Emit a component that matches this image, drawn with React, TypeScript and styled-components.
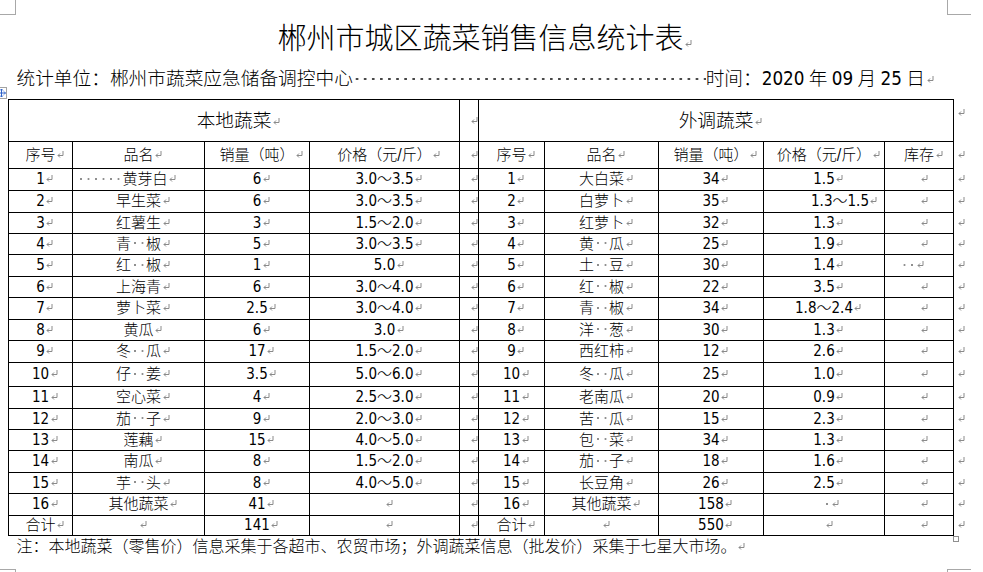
import React from "react";
import styled, { createGlobalStyle } from "styled-components";

const MIX = `"DejaVu Sans Condensed", "Noto Sans CJK SC", sans-serif`;

const GlobalStyle = createGlobalStyle`
  html, body { margin: 0; padding: 0; background: #fff; }
  body { font-family: ${MIX}; color: #000; font-weight: 300; }
`;

const Page = styled.div`
  position: relative;
  width: 983px;
  height: 572px;
  overflow: hidden;
  padding-left: 8px;
  box-sizing: border-box;
  background: #fff;
`;

const Title = styled.h1`
  margin: 16px 0 0;
  width: 945px;
  height: 40px;
  font: 300 29px/40px "Noto Sans CJK SC", sans-serif;
  text-align: center;
  white-space: nowrap;
`;

const InfoLine = styled.div`
  display: flex;
  align-items: center;
  margin: 10.5px 0 0 8.5px;
  width: 908.5px;
  height: 24px;
  font-size: 18.7px;
  line-height: 24px;
  white-space: nowrap;
`;

const Leader = styled.span`
  flex: 1;
  align-self: stretch;
  background-image: radial-gradient(circle, #444 1px, transparent 1.5px);
  background-size: 8.1px 100%;
  background-repeat: repeat-x;
  background-position: 0 55%;
`;

const TimeText = styled.span`
  word-spacing: -1px;
`;

const Sheet = styled.table`
  margin-top: 8.5px;
  border-collapse: collapse;
  table-layout: fixed;
  width: 965px;
  font-family: ${MIX};
  font-size: 15px;
`;

const Row = styled.tr<{ $h: number }>`
  height: ${(p) => p.$h}px;
`;

const Cell = styled.td<{ $shift?: number; $big?: boolean }>`
  border: 1px solid #000;
  padding: 0 ${(p) => (p.$shift && p.$shift < 0 ? -2 * p.$shift : 0)}px 0
    ${(p) => (p.$shift && p.$shift > 0 ? 2 * p.$shift : 0)}px;
  text-align: center;
  vertical-align: middle;
  white-space: nowrap;
  line-height: 18px;
  font-size: ${(p) => (p.$big ? 18.7 : 15)}px;
`;

const EndCell = styled.td<{ $top?: boolean }>`
  border: none;
  padding: ${(p) => (p.$top ? "4px" : "0")} 0 0 2px;
  vertical-align: ${(p) => (p.$top ? "top" : "middle")};
  text-align: left;
  line-height: 18px;
  white-space: nowrap;
`;

const MarkSvg = styled.svg`
  display: inline-block;
  width: 7px;
  height: 7px;
  margin-left: 1.5px;
  margin-right: -8.5px;
  vertical-align: 2px;
  overflow: visible;
`;

const SpaceDot = styled.span<{ $tone?: string }>`
  display: inline-block;
  width: 7.5px;
  height: 10px;
  vertical-align: 0.5px;
  background: radial-gradient(circle at 50% 50%, ${(p) => p.$tone || "#8f8f8f"} 0.8px, transparent 1.3px);
`;

const Note = styled.p`
  margin: 0 0 0 8.5px;
  font-size: 16px;
  line-height: 22px;
  white-space: nowrap;
`;

const MoveHandle = styled.div`
  position: absolute;
  left: -4px;
  top: 87px;
  width: 11px;
  height: 12px;
  box-sizing: border-box;
  border: 1px solid #a3a3a3;
  background: #fff;
  display: flex;
  align-items: center;
  justify-content: center;
`;

const CropMark = styled.div<{ $corner: "tl" | "tr" | "bl" | "br" }>`
  position: absolute;
  width: ${(p) => (p.$corner === "tl" || p.$corner === "bl" ? 16 : 24)}px;
  height: 15px;
  box-sizing: border-box;
  border-color: #a8a8a8;
  border-style: solid;
  border-width: 0;
  ${(p) =>
    p.$corner === "tl"
      ? "left:0; top:0; border-right-width:1px; border-bottom-width:1px;"
      : p.$corner === "tr"
      ? "left:947px; top:0; border-left-width:1px; border-bottom-width:1px;"
      : p.$corner === "bl"
      ? "left:0; top:569px; border-right-width:1px; border-top-width:1px;"
      : "left:947px; top:569px; border-left-width:1px; border-top-width:1px;"}
`;

const ResizeBox = styled.div`
  position: absolute;
  left: 953px;
  top: 536px;
  width: 6px;
  height: 6px;
  box-sizing: border-box;
  border: 1px solid #8f8f8f;
  background: #fff;
`;

const Mark = () => (
  <MarkSvg viewBox="0 0 7 7">
    <path d="M6 0 V4.5 H1" fill="none" stroke="#8a8a8a" strokeWidth="1" />
    <path d="M3 2.5 L1 4.5 L3 6.5" fill="none" stroke="#8a8a8a" strokeWidth="1" />
  </MarkSvg>
);

const Text = ({ t }: { t: string }) => (
  <>
    {t.split("").map((c, i) =>
      c === "·" ? <SpaceDot key={i} /> : <React.Fragment key={i}>{c}</React.Fragment>
    )}
    <Mark />
  </>
);

type C = string | { t: string; s: number };

const local: C[][] = [
  ["1", { t: "······黄芽白", s: -16 }, "6", "3.0～3.5"],
  ["2", "早生菜", "6", "3.0～3.5"],
  ["3", "红薯生", "3", "1.5～2.0"],
  ["4", "青··椒", "5", "3.0～3.5"],
  ["5", "红··椒", "1", "5.0"],
  ["6", "上海青", "6", "3.0～4.0"],
  ["7", "萝卜菜", "2.5", "3.0～4.0"],
  ["8", "黄瓜", "6", "3.0"],
  ["9", "冬··瓜", "17", "1.5～2.0"],
  ["10", "仔··姜", "3.5", "5.0～6.0"],
  ["11", "空心菜", "4", "2.5～3.0"],
  ["12", "茄··子", "9", "2.0～3.0"],
  ["13", "莲藕", "15", "4.0～5.0"],
  ["14", "南瓜", "8", "1.5～2.0"],
  ["15", "芋··头", "8", "4.0～5.0"],
  ["16", "其他蔬菜", "41", ""],
  ["合计", "", "141", ""],
];

const remote: C[][] = [
  ["1", "大白菜", "34", "1.5", ""],
  ["2", "白萝卜", "35", { t: "1.3～1.5", s: 16 }, ""],
  ["3", "红萝卜", "32", "1.3", ""],
  ["4", "黄··瓜", "25", "1.9", ""],
  ["5", "土··豆", "30", "1.4", { t: "··", s: -11 }],
  ["6", "红··椒", "22", "3.5", ""],
  ["7", "青··椒", "34", "1.8～2.4", ""],
  ["8", "洋··葱", "30", "1.3", ""],
  ["9", "西红柿", "12", "2.6", ""],
  ["10", "冬··瓜", "25", "1.0", ""],
  ["11", "老南瓜", "20", "0.9", ""],
  ["12", "苦··瓜", "15", "2.3", ""],
  ["13", "包··菜", "34", "1.3", ""],
  ["14", "茄··子", "18", "1.6", ""],
  ["15", "长豆角", "26", "2.5", ""],
  ["16", "其他蔬菜", "158", { t: "·", s: 3 }, ""],
  ["合计", "", "550", "", ""],
];

const heights = [21.5, 22, 21, 21.5, 21.5, 21.5, 21.5, 21.5, 21.5, 24, 22, 21, 21.5, 21.5, 21.5, 21.5, 20.5];

const colWidths = [64, 132, 105, 150, 19, 66, 114, 105, 121, 69, 20];

const DataCell = ({ c }: { c: C }) =>
  typeof c === "string" ? (
    <Cell>
      <Text t={c} />
    </Cell>
  ) : (
    <Cell $shift={c.s}>
      <Text t={c.t} />
    </Cell>
  );

const headers = ["序号", "品名", "销量（吨）", "价格（元/斤）"];

export default function App() {
  return (
    <>
      <GlobalStyle />
      <Page>
        <CropMark $corner="tl" />
        <CropMark $corner="tr" />
        <CropMark $corner="bl" />
        <CropMark $corner="br" />
        <Title>
          郴州市城区蔬菜销售信息统计表
          <Mark />
        </Title>
        <InfoLine>
          <span>统计单位：郴州市蔬菜应急储备调控中心</span>
          <Leader />
          <TimeText>
            时间：2020 年 09 月 25 日
            <Mark />
          </TimeText>
        </InfoLine>
        <MoveHandle>
          <svg width="9" height="10" viewBox="0 0 9 10">
            <g fill="none" stroke="#2f63c9" strokeWidth="1">
              <path d="M4.5 1 V9 M0.5 5 H8.5" />
              <path d="M3 2.5 L4.5 1 L6 2.5 M3 7.5 L4.5 9 L6 7.5 M2 3.5 L0.5 5 L2 6.5 M7 3.5 L8.5 5 L7 6.5" />
            </g>
          </svg>
        </MoveHandle>
        <Sheet>
          <colgroup>
            {colWidths.map((w, i) => (
              <col key={i} style={{ width: w }} />
            ))}
          </colgroup>
          <tbody>
            <Row $h={42}>
              <Cell colSpan={4} $big>
                <Text t="本地蔬菜" />
              </Cell>
              <Cell>
                <Text t="" />
              </Cell>
              <Cell colSpan={5} $big>
                <Text t="外调蔬菜" />
              </Cell>
              <EndCell $top>
                <Mark />
              </EndCell>
            </Row>
            <Row $h={27}>
              {headers.map((h) => (
                <Cell key={"l" + h}>
                  <Text t={h} />
                </Cell>
              ))}
              <Cell>
                <Text t="" />
              </Cell>
              {headers.map((h) => (
                <Cell key={"r" + h}>
                  <Text t={h} />
                </Cell>
              ))}
              <Cell>
                <Text t="库存" />
              </Cell>
              <EndCell>
                <Mark />
              </EndCell>
            </Row>
            {local.map((lr, i) => (
              <Row key={i} $h={heights[i]}>
                {lr.map((c, j) => (
                  <DataCell key={"l" + j} c={c} />
                ))}
                <Cell>
                  <Text t="" />
                </Cell>
                {remote[i].map((c, j) => (
                  <DataCell key={"r" + j} c={c} />
                ))}
                <EndCell>
                  <Mark />
                </EndCell>
              </Row>
            ))}
          </tbody>
        </Sheet>
        <Note>
          注：本地蔬菜（零售价）信息采集于各超市、农贸市场；外调蔬菜信息（批发价）采集于七星大市场。
          <Mark />
        </Note>
        <ResizeBox />
      </Page>
    </>
  );
}
